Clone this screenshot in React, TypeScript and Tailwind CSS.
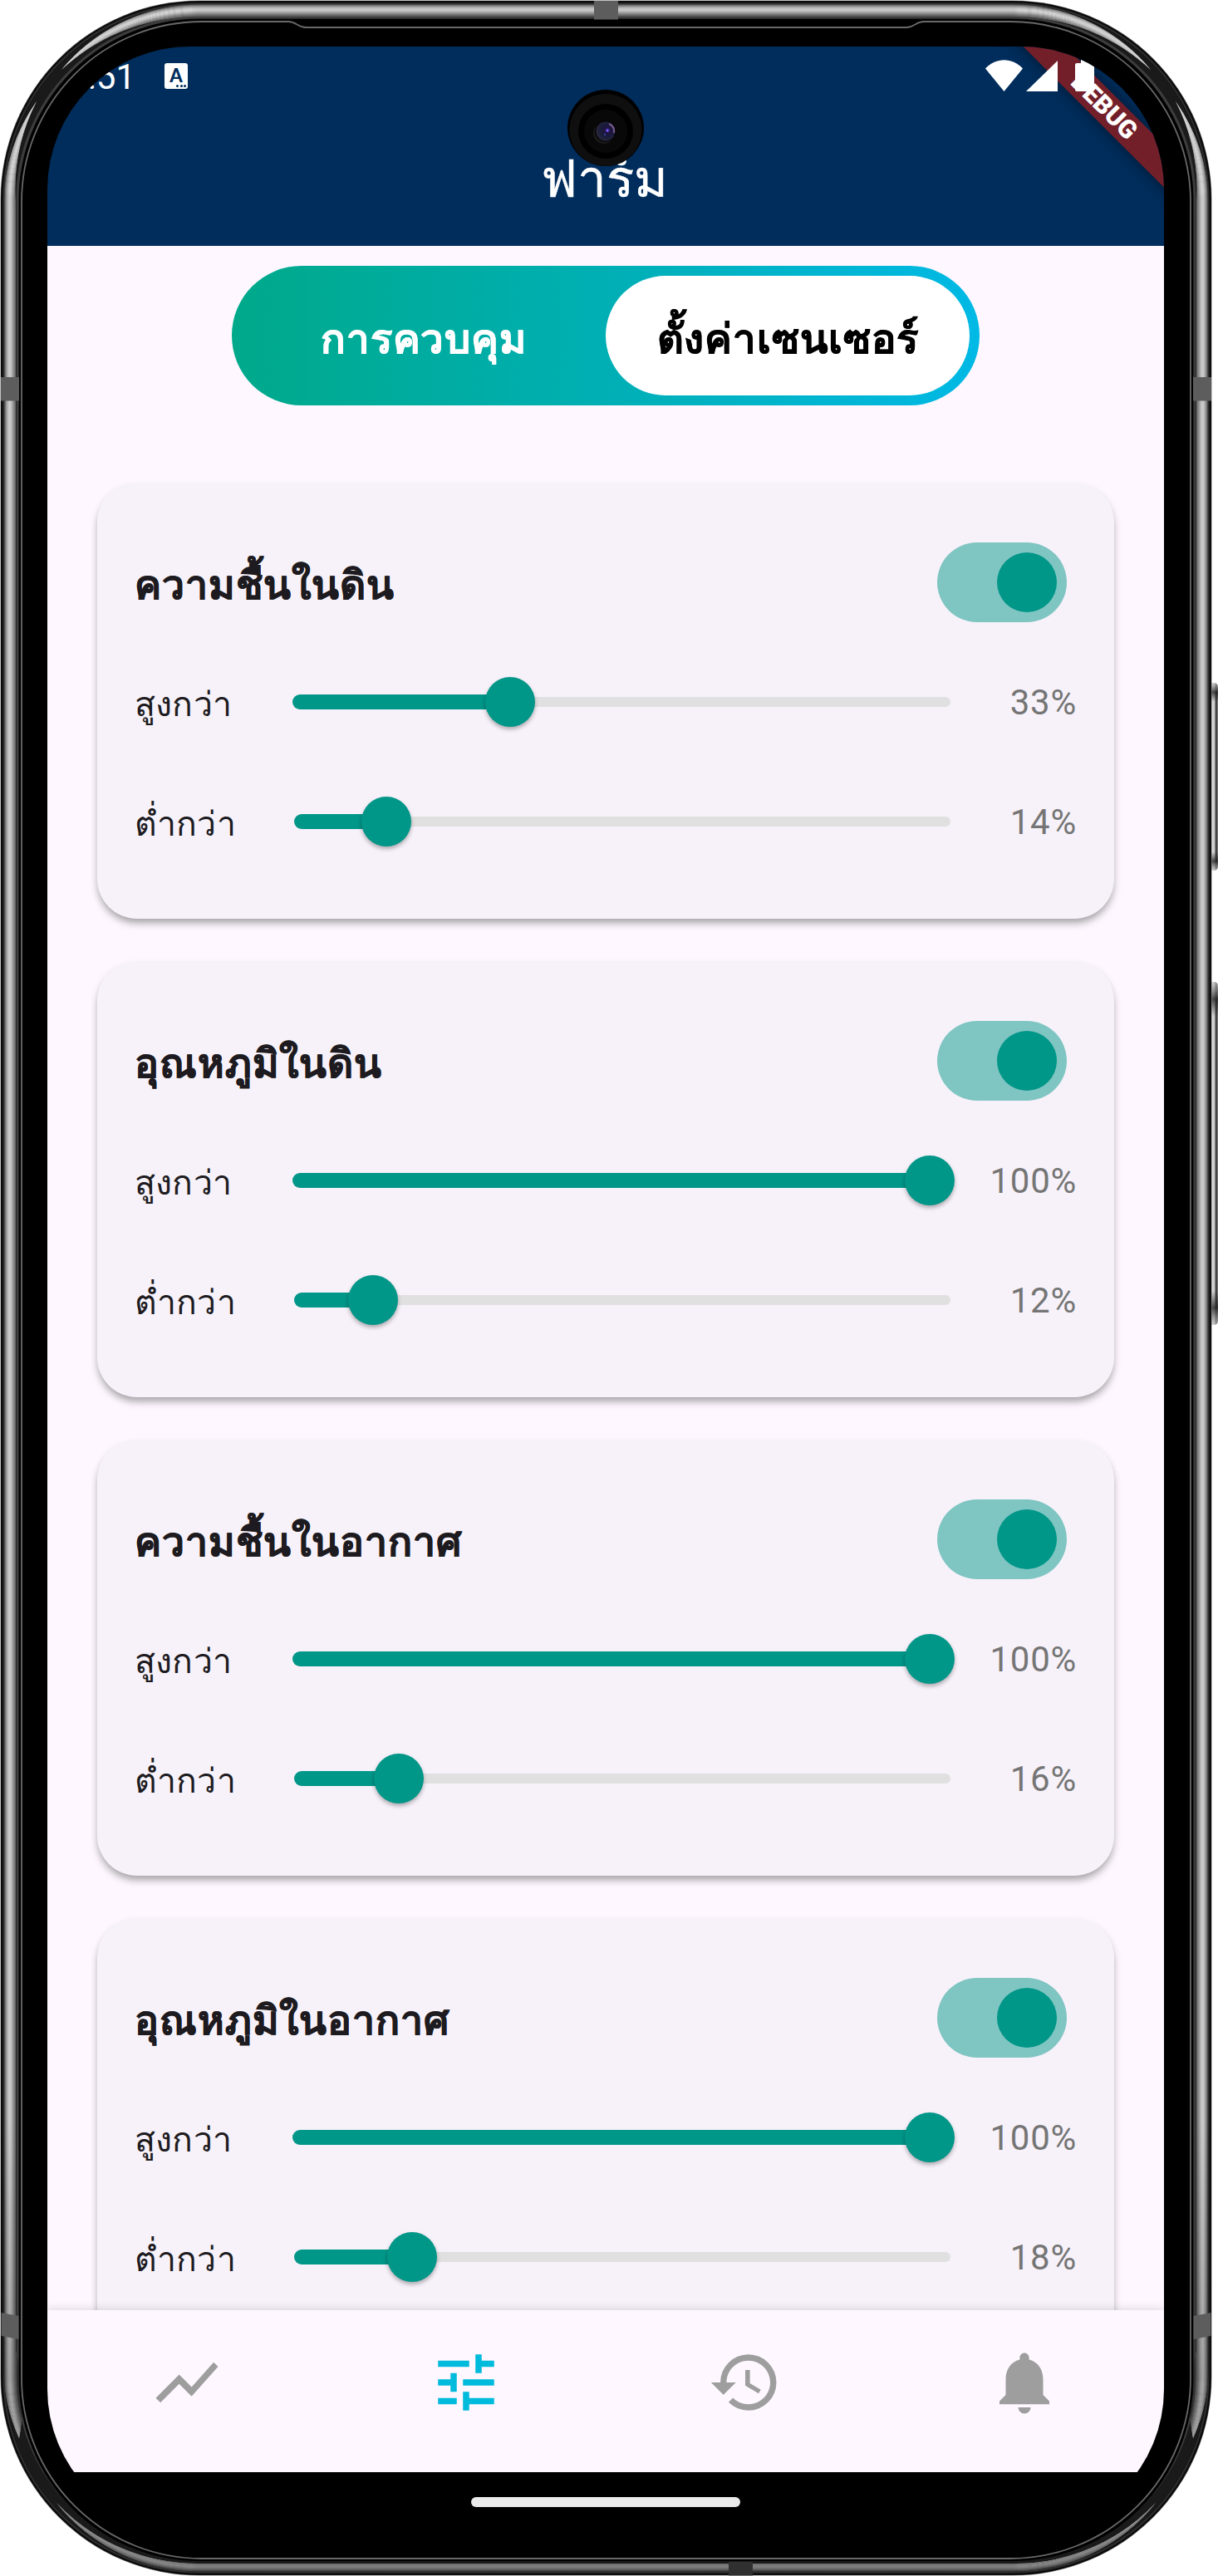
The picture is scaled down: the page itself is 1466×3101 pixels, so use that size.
import type { ReactNode } from 'react';
import { MdHistory, MdNotifications, MdShowChart, MdTune } from 'react-icons/md';

type SliderData = { label: string; value: string; start: number; thumb: number };
type Sensor = { title: string; sliders: SliderData[] };

const high = (value: string, thumb: number): SliderData => ({ label: 'สูงกว่า', value, start: 0, thumb });
const low = (value: string, thumb: number): SliderData => ({ label: 'ต่ำกว่า', value, start: 2, thumb });

const sensors: Sensor[] = [
  { title: 'ความชื้นในดิน', sliders: [high('33%', 261.5), low('14%', 112.5)] },
  { title: 'อุณหภูมิในดิน', sliders: [high('100%', 767.3), low('12%', 97)] },
  { title: 'ความชื้นในอากาศ', sliders: [high('100%', 767.3), low('16%', 128)] },
  { title: 'อุณหภูมิในอากาศ', sliders: [high('100%', 767.3), low('18%', 144)] },
];

/* Brightness of the metal rim, from the outer edge inwards */
const rim: [number, string][] = [
  [5.5, '#5c5c5c'], [6.5, '#7c7c7c'], [7.5, '#999999'], [8.5, '#b0b0b0'], [9.5, '#c2c2c2'],
  [10.5, '#cfcfcf'], [11.5, '#d4d4d4'], [12.5, '#cecece'], [13.5, '#c2c2c2'], [14.5, '#b0b0b0'],
  [15.5, '#9e9e9e'], [16.5, '#8c8c8c'], [17.5, '#7a7a7a'], [18.5, '#6a6a6a'],
];

function RimRect({ inset, color, width = 1.6 }: { inset: number; color: string; width?: number }) {
  return (
    <rect
      x={1 + inset} y={1 + inset} width={1457 - inset * 2} height={3099 - inset * 2}
      rx={239 - inset} fill="none" stroke={color} strokeWidth={width}
    />
  );
}

const topShine = 'M74 84A222 222 0 0 1 228 5H1231A222 222 0 0 1 1385 84A232 232 0 0 0 1231 21H228A232 232 0 0 0 74 84Z';
const leftShine = 'M44 122A222 222 0 0 0 4 245V2830A222 222 0 0 0 23 2935A240 240 0 0 0 19 2830V245A232 232 0 0 1 44 122Z';
const bottomShine = 'M68 3013A222 222 0 0 0 240 3096H1219A222 222 0 0 0 1391 3013A232 232 0 0 1 1219 3086H240A232 232 0 0 1 68 3013Z';

function DeviceFrame() {
  return (
    <svg className="absolute inset-0" width="1466" height="3101" viewBox="0 0 1466 3101" aria-hidden="true">
      <defs>
        <clipPath id="shine">
          <path d={topShine} />
          <path d={leftShine} />
          <path d={leftShine} transform="translate(1459 0) scale(-1 1)" />
          <path d={bottomShine} />
        </clipPath>
        <linearGradient id="shade" x1="0" y1="0" x2="0" y2="1">
          <stop offset="0" stopColor="#000" stopOpacity="0" />
          <stop offset="0.75" stopColor="#000" stopOpacity="0.28" />
          <stop offset="1" stopColor="#000" stopOpacity="0.38" />
        </linearGradient>
        <linearGradient id="key" x1="0" y1="0" x2="1" y2="0">
          <stop offset="0" stopColor="#777" />
          <stop offset="0.45" stopColor="#e0e0e0" />
          <stop offset="0.7" stopColor="#c8c8c8" />
          <stop offset="0.85" stopColor="#222" />
          <stop offset="1" stopColor="#999" />
        </linearGradient>
        <linearGradient id="keyEnds" x1="0" y1="0" x2="0" y2="1">
          <stop offset="0" stopColor="#ccc" stopOpacity="0.6" />
          <stop offset="0.05" stopColor="#222" stopOpacity="0.8" />
          <stop offset="0.1" stopColor="#222" stopOpacity="0" />
          <stop offset="0.9" stopColor="#222" stopOpacity="0" />
          <stop offset="0.95" stopColor="#222" stopOpacity="0.8" />
          <stop offset="1" stopColor="#ccc" stopOpacity="0.6" />
        </linearGradient>
      </defs>
      {[[822, 226], [1182, 413]].map(([y, h]) => (
        <g key={y}>
          <rect x="1452" y={y} width="14" height={h} rx="5" fill="url(#key)" />
          <rect x="1452" y={y} width="14" height={h} rx="5" fill="url(#keyEnds)" />
        </g>
      ))}
      <rect x="0.5" y="0.5" width="1458" height="3100" rx="239.5" fill="#8c8c8c" />
      <rect x="1" y="1" width="1457" height="3099" rx="239" fill="#0c0c0c" />
      <RimRect inset={3.5} color="#303030" width={2} />
      <RimRect inset={12} color="#1a1a1a" width={14} />
      <RimRect inset={20} color="#3d3d3d" width={3} />
      <g clipPath="url(#shine)">
        {rim.map(([inset, color]) => <RimRect key={inset} inset={inset - 0.5} color={color} />)}
        <rect x="0" y="2550" width="1460" height="551" fill="url(#shade)" />
      </g>
      <rect x="23" y="23" width="1413" height="3060" rx="217" fill="#000" />
      <path
        d="M243 26H347C357 26 358 33 368 33H1091C1101 33 1102 26 1112 26H1216A217 217 0 0 1 1433 243V2863A217 217 0 0 1 1216 3080H243A217 217 0 0 1 26 2863V243A217 217 0 0 1 243 26Z"
        fill="none" stroke="#686868" strokeWidth="1.8"
      />
      <g fill="#5d5d5d">
        <rect x="715" y="1" width="29" height="22.5" />
        <rect x="1" y="454" width="22" height="28.5" />
        <rect x="1436" y="454" width="22" height="28.5" />
        <path d="M1.500 2784L22.500 2788V2816L1.500 2812Z" />
        <path d="M1457.500 2784L1436.500 2788V2816L1457.500 2812Z" />
      </g>
      <rect x="877" y="3084" width="29" height="16.500" fill="#303030" />
    </svg>
  );
}

function StatusBar() {
  return (
    <div className="flex h-[90px] items-start pl-[25px] pr-[84px] text-white">
      <span className="mt-[13px] w-[81px] whitespace-nowrap font-['Roboto',sans-serif] text-[42px] leading-[48px]">9:51</span>
      <div className="ml-[35px] mt-[20px] flex h-[31px] w-[28px] flex-col items-center rounded-[3px] bg-white text-[#002d5c]">
        <span className="h-[23px] font-['Lato',sans-serif] text-[22px] font-black leading-[29px]">A</span>
        <div className="mt-[2.500px] flex gap-[1.500px] self-end pr-[2px]">
          <i className="size-[3px] rounded-full bg-[#002d5c]" />
          <i className="size-[3px] rounded-full bg-[#002d5c]" />
          <i className="size-[3px] rounded-full bg-[#002d5c]" />
        </div>
      </div>
      <svg className="relative z-20 ml-auto mt-[16px]" width="131" height="38" viewBox="0 0 131 38" fill="#fff" aria-hidden="true">
        <path d="M0 10.500C13-3.200 32-3.200 45 10.500L22.500 38Z" />
        <path d="M87 1V38H49Z" />
        <path d="M115 0H124V4H129Q131 4 131 6V36Q131 38 129 38H110Q108 38 108 36V6Q108 4 110 4H115Z" />
      </svg>
    </div>
  );
}

function DebugBanner() {
  return (
    <div className="absolute left-[1072px] top-[54px] z-10 flex h-[36px] w-[400px] rotate-45 items-center justify-center bg-[#731f29] shadow-[0_0_18px_rgba(0,0,0,0.5)]">
      <span className="font-['Roboto',sans-serif] text-[30.600px] font-black leading-none text-white">DEBUG</span>
    </div>
  );
}

function Camera() {
  return (
    <svg className="absolute left-[626px] top-[52px] z-10" width="92" height="92" viewBox="0 0 92 92" aria-hidden="true">
      <defs>
        <radialGradient id="lens" cx="0.6" cy="0.45" r="0.6">
          <stop offset="0" stopColor="#4a2fb0" />
          <stop offset="0.25" stopColor="#1d1440" />
          <stop offset="0.7" stopColor="#1b1f38" />
          <stop offset="1" stopColor="#2d2740" />
        </radialGradient>
      </defs>
      <circle cx="46" cy="46" r="46" fill="#000" />
      <circle cx="46" cy="48.500" r="43.500" fill="#0f0f0f" />
      <circle cx="46" cy="50" r="33" fill="#000" />
      <circle cx="46" cy="50" r="26" fill="#080808" />
      <circle cx="44" cy="52" r="13" fill="#1a1a1a" />
      <circle cx="46" cy="50" r="13" fill="#050505" />
      <circle cx="46" cy="50" r="11.500" fill="url(#lens)" />
      <path d="M50 41Q57 44 56 52" fill="none" stroke="#8d6a9c" strokeWidth="2" opacity="0.8" />
      <circle cx="48" cy="49" r="1.500" fill="#7a5cff" />
      <circle cx="45" cy="54" r="1" fill="#3c4fc8" />
    </svg>
  );
}

function Tab({ active, children }: { active?: boolean; children: ReactNode }) {
  return (
    <button className={active
      ? 'flex h-full flex-1 items-center justify-center rounded-full bg-white pt-[4px] text-black'
      : 'flex h-full flex-1 items-center justify-center rounded-full pt-[4px] text-white'}>
      <span className="text-[49px] font-bold leading-none tracking-[0.9px] [-webkit-text-stroke:0.6px_currentColor]">{children}</span>
    </button>
  );
}

function SliderRow({ label, value, start, thumb }: SliderData) {
  return (
    <div className="flex h-[144px] items-center">
      <span className="w-[190px] shrink-0 whitespace-nowrap pt-[3px] text-[41px] leading-none tracking-[0.2px] text-[#1d1b20]">{label}</span>
      <div className="relative flex h-[60px] w-[792px] items-center">
        <div className="ml-[6px] h-[12px] flex-1 rounded-full bg-[#e0e0e0]" />
        <div className="absolute top-[21px] h-[18px] rounded-full bg-[#009688]" style={{ left: start, width: thumb - start }} />
        <div className="absolute top-0 size-[60px] rounded-full bg-[#009688] shadow-[0_3px_5px_rgba(0,0,0,0.3)]" style={{ left: thumb - 30 }} />
      </div>
      <span className="flex-1 pt-[2px] text-right font-['Roboto',sans-serif] text-[42px] leading-none tracking-[0.75px] text-[#757575]">{value}</span>
    </div>
  );
}

function SensorCard({ title, sliders }: Sensor) {
  return (
    <section className="h-[525px] shrink-0 rounded-[48px] bg-[#f7f2fa] px-[45px] pt-[48px] shadow-[0_6px_10px_-1px_rgba(0,0,0,0.35)]">
      <div className="flex h-[144px] items-center justify-between pr-[12px]">
        <h2 className="pt-[4px] text-[48px] font-bold leading-none tracking-[0.9px] text-[#1d1b20] [-webkit-text-stroke:0.6px_currentColor]">{title}</h2>
        <div className="flex h-[96px] w-[156px] items-center justify-end rounded-full bg-[#7fc5c2] pr-[12px]">
          <div className="size-[72px] rounded-full bg-[#009688]" />
        </div>
      </div>
      {sliders.map((s) => <SliderRow key={s.label} {...s} />)}
    </section>
  );
}

export default function App() {
  return (
    <div className="relative h-[3101px] w-[1466px] overflow-hidden bg-white pl-[57px] pt-[56px] font-['Noto_Sans',sans-serif]">
      <DeviceFrame />
      <main className="relative flex h-[2992px] w-[1344px] flex-col overflow-hidden rounded-[172px] bg-black">
        <header className="h-[240px] shrink-0 bg-[#002d5c]">
          <StatusBar />
          <h1 className="mt-[31px] pr-[3px] text-center text-[62px] leading-[72px] text-white [-webkit-text-stroke:0.5px_currentColor]">ฟาร์ม</h1>
        </header>
        <Camera />
        <DebugBanner />
        <div className="flex h-[2485px] shrink-0 flex-col overflow-hidden bg-[#fef7ff] px-[60px] pt-[24px]">
          <div className="mx-auto flex h-[168px] w-[900px] shrink-0 rounded-full bg-linear-to-r from-[#00a98a] via-[#00afb4] to-[#00b9e5] p-[12px]">
            <Tab>การควบคุม</Tab>
            <Tab active>ตั้งค่าเซนเซอร์</Tab>
          </div>
          <div className="mt-[93px] flex flex-col gap-[51px]">
            {sensors.map((s) => <SensorCard key={s.title} {...s} />)}
          </div>
        </div>
        <nav className="relative grid h-[195px] shrink-0 grid-cols-4 place-items-center bg-[#fef7ff] pb-[21px] text-[90px] text-[#9e9e9e] shadow-[0_-3px_9px_rgba(0,0,0,0.1)]">
          <MdShowChart />
          <MdTune className="text-[#00bbdb]" />
          <MdHistory />
          <MdNotifications />
        </nav>
        <footer className="flex h-[72px] items-center justify-center bg-black">
          <div className="h-[12px] w-[324px] rounded-full bg-[#ebebeb]" />
        </footer>
      </main>
    </div>
  );
}
